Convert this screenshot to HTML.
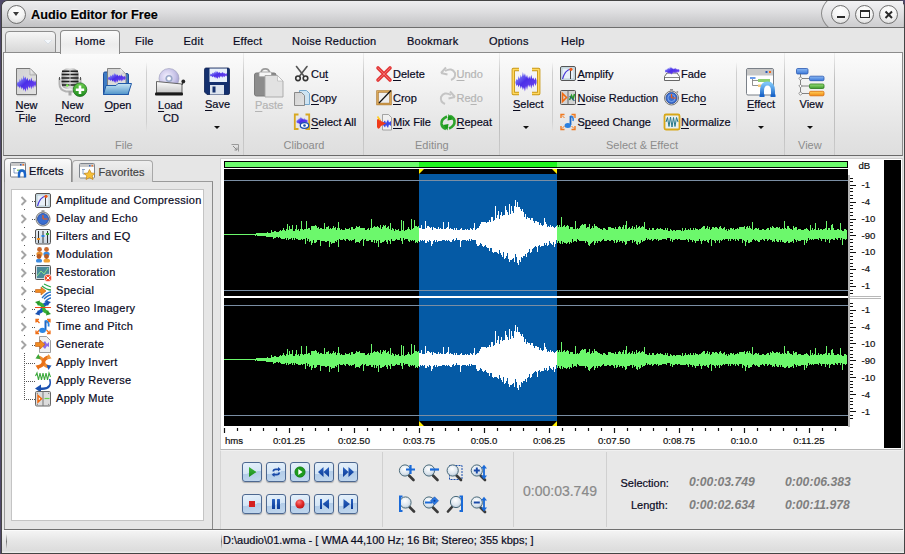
<!DOCTYPE html>
<html><head><meta charset="utf-8">
<style>
*{margin:0;padding:0;box-sizing:border-box}
html,body{width:905px;height:554px;overflow:hidden}
body{position:relative;background:#50496a;font-family:"Liberation Sans",sans-serif;font-size:11px;color:#0a0a1e}
.tx,.tab,.tree,.sl{-webkit-text-stroke:0.2px currentColor}
.a{position:absolute}
.tx{position:absolute;line-height:0;white-space:nowrap}
.cb{position:absolute;width:19px;height:19px;border-radius:50%;border:1px solid #707070;background:radial-gradient(circle at 50% 30%,#ffffff 0,#f4f4f4 50%,#d2d2d2 100%)}
.tab{position:absolute;top:41px;line-height:0;white-space:nowrap;letter-spacing:0.25px}
.lbl{position:absolute;top:145.4px;line-height:0;color:#8c8c8c;white-space:nowrap}
.gsep{position:absolute;top:53px;width:1px;height:102px;background:linear-gradient(#eeeeee,#c0c0c0 25%,#c0c0c0 75%,#cccccc)}
.isep{position:absolute;top:62px;width:1px;height:70px;background:linear-gradient(rgba(205,205,205,0),#cfcfcf 15%,#cfcfcf 85%,rgba(205,205,205,0))}
.arr{position:absolute;width:0;height:0;border-left:3px solid transparent;border-right:3px solid transparent;border-top:3px solid #111}
.tree{position:absolute;left:56px;line-height:0;white-space:nowrap;letter-spacing:0.3px}
.exp{position:absolute;left:20px;width:5px;height:5px;border-right:1.2px solid #909090;border-top:1.2px solid #909090;transform:rotate(45deg)}
.tb{position:absolute;width:20px;height:20px;border:1px solid #4d6890;border-radius:3px;background:linear-gradient(168deg,#e6f1fb 0,#d4e5f5 52%,#b2cce8 53%,#c2d8ee 100%);box-shadow:0 1px 1px rgba(0,0,0,0.25)}
.sl{position:absolute;left:861.5px;line-height:0;font-size:9.6px;color:#111;white-space:nowrap}
.val{position:absolute;line-height:0;font-weight:bold;font-style:italic;font-size:12.2px;color:#7f7f7f;white-space:nowrap}
.ico{position:absolute}
u{text-decoration:underline;text-underline-offset:1.5px;text-decoration-thickness:1px}
</style></head><body>
<!-- window frame -->
<div class="a" style="left:1px;top:0;width:904px;height:554px;background:#444;border-radius:7px 7px 0 0"></div>
<div class="a" style="left:2px;top:1px;width:902px;height:552px;background:#e6e6e6;border-radius:6px 6px 0 0;overflow:hidden">
  <div class="a" style="left:0;top:0;width:902px;height:26px;background:linear-gradient(#eeeef0,#dcdcde 45%,#c2c2c4)"></div>
</div>
<!-- title bar -->
<div class="cb" style="left:7px;top:5px"></div>
<div class="a" style="left:13px;top:12px;width:0;height:0;border-left:3.5px solid transparent;border-right:3.5px solid transparent;border-top:4px solid #3a3a3a"></div>
<div class="tx" style="left:31px;top:15px;font-size:12.7px;font-weight:bold;color:#000;text-shadow:0 0 3px #fff,0 0 2px #fff">Audio Editor for Free</div>
<div class="a" style="left:800px;top:1px;width:103px;height:27px;overflow:hidden"><div class="a" style="left:21px;top:-26px;width:200px;height:77px;border-radius:50%;border:1px solid #8a8a8a;background:linear-gradient(#f6f6f8 30%,#e2e2e4 50%,#d0d0d2 65%)"></div></div>
<div class="cb" style="left:831px;top:5px"></div>
<div class="cb" style="left:855px;top:5px"></div>
<div class="cb" style="left:879px;top:5px"></div>
<div class="a" style="left:837px;top:15.5px;width:7.5px;height:2.5px;background:#2a2a2a"></div>
<div class="a" style="left:860px;top:10px;width:10px;height:8px;border:1.5px solid #2a2a2a;border-top-width:2.5px"></div>
<svg class="a" style="left:879px;top:5px" width="19" height="19"><path d="M6.5 6.5L13 13M13 6.5L6.5 13" stroke="#2a2a2a" stroke-width="2"/></svg>
<div class="a" style="left:2px;top:27px;width:902px;height:1px;background:#6e6e6e"></div>

<!-- tab strip -->
<div class="a" style="left:2px;top:28px;width:902px;height:25px;background:#e6e6e6"></div>
<div class="a" style="left:5px;top:31px;width:51px;height:23px;border:1px solid #8e8e8e;border-radius:4px 4px 0 0;background:linear-gradient(#f6f6f6,#e6e6e6 50%,#d6d6d6)"></div>
<div class="a" style="left:44px;top:40px;width:0;height:0;border-left:4px solid transparent;border-right:4px solid transparent;border-top:4px solid #f4f8fc;filter:drop-shadow(0 0 0.5px #9ab)"></div>
<div class="a" style="left:60px;top:30px;width:60px;height:24px;border:1px solid #8a8a8a;border-bottom:none;border-radius:4px 4px 0 0;background:linear-gradient(#fafafa,#ececec 60%,#f4f4f4);z-index:2"></div>
<div class="tab" style="left:75px;z-index:3">Home</div>
<div class="tab" style="left:135px">File</div>
<div class="tab" style="left:183.5px">Edit</div>
<div class="tab" style="left:233px">Effect</div>
<div class="tab" style="left:292px">Noise Reduction</div>
<div class="tab" style="left:407px">Bookmark</div>
<div class="tab" style="left:489px">Options</div>
<div class="tab" style="left:561px">Help</div>

<!-- ribbon -->
<div class="a" style="left:3px;top:52px;width:900px;height:104px;border:1px solid #8c8c8c;border-bottom:1px solid #6a6a6a;background:linear-gradient(#fbfbfb,#eeeeee 45%,#e3e3e3 80%,#dedede)"></div>
<div class="gsep" style="left:243px"></div>
<div class="gsep" style="left:363px"></div>
<div class="gsep" style="left:499px"></div>
<div class="gsep" style="left:784px"></div>
<div class="gsep" style="left:834px"></div>
<div class="isep" style="left:146px"></div>
<div class="isep" style="left:552px"></div>
<div class="isep" style="left:736px"></div>
<div class="lbl" style="left:115px">File</div>
<div class="lbl" style="left:283.5px">Cliboard</div>
<div class="lbl" style="left:415px">Editing</div>
<div class="lbl" style="left:606px">Select &amp; Effect</div>
<div class="lbl" style="left:798px">View</div>
<svg class="a" style="left:231px;top:144px" width="8" height="8"><path d="M0.5 0.5H7.5V7.5" fill="none" stroke="#9a9a9a"/><path d="M2 2L6 6M3.5 6H6V3.5" fill="none" stroke="#8a8a8a"/></svg>

<!--RIBBONICONS-->
<svg class="a" style="left:0;top:0" width="905" height="554">
<defs>
<linearGradient id="gWave" x1="0" y1="0" x2="1" y2="1"><stop offset="0" stop-color="#9fb4ff"/><stop offset="0.45" stop-color="#4a2ee8"/><stop offset="1" stop-color="#7a4cf0"/></linearGradient>
<linearGradient id="gDoc" x1="0" y1="0" x2="1" y2="1"><stop offset="0" stop-color="#d2d2d2"/><stop offset="1" stop-color="#e2e2e2"/></linearGradient>
<linearGradient id="gFold" x1="0" y1="0" x2="1" y2="1"><stop offset="0" stop-color="#ffffff"/><stop offset="1" stop-color="#bdbdbd"/></linearGradient>
<linearGradient id="gFolder" x1="0" y1="0" x2="0" y2="1"><stop offset="0" stop-color="#c8e6f4"/><stop offset="1" stop-color="#4f93c9"/></linearGradient>
<linearGradient id="gMic" x1="0" y1="0" x2="1" y2="0"><stop offset="0" stop-color="#9a9a9a"/><stop offset="0.5" stop-color="#e8e8e8"/><stop offset="1" stop-color="#8a8a8a"/></linearGradient>
<linearGradient id="gBox" x1="0" y1="0" x2="0" y2="1"><stop offset="0" stop-color="#ffffff"/><stop offset="1" stop-color="#c4c4c4"/></linearGradient>
<radialGradient id="gCD" cx="0.4" cy="0.4" r="0.7"><stop offset="0" stop-color="#f4f0ff"/><stop offset="0.6" stop-color="#c8c4e8"/><stop offset="1" stop-color="#9a96c8"/></radialGradient>
<linearGradient id="gYel" x1="0" y1="0" x2="0" y2="1"><stop offset="0" stop-color="#ffe27a"/><stop offset="1" stop-color="#f0c030"/></linearGradient>
<linearGradient id="gGreenBall" x1="0" y1="0" x2="0" y2="1"><stop offset="0" stop-color="#6ccf4c"/><stop offset="1" stop-color="#1c8a1c"/></linearGradient>
<linearGradient id="gBlueBar" x1="0" y1="0" x2="0" y2="1"><stop offset="0" stop-color="#8ab8f4"/><stop offset="1" stop-color="#3c78d8"/></linearGradient>
<linearGradient id="gGreenBar" x1="0" y1="0" x2="0" y2="1"><stop offset="0" stop-color="#9ce07a"/><stop offset="1" stop-color="#3c9a2c"/></linearGradient>
<linearGradient id="gOrBar" x1="0" y1="0" x2="0" y2="1"><stop offset="0" stop-color="#ffd060"/><stop offset="1" stop-color="#f08a10"/></linearGradient>
<linearGradient id="gOmega" x1="0" y1="0" x2="0" y2="1"><stop offset="0" stop-color="#7cc4f8"/><stop offset="1" stop-color="#1a64c8"/></linearGradient>
<path id="wave" d="M0 8 L1 6 2 7 3 4 4 6 5 3 6 5 7 1 8 4 9 2 10 5 11 3 12 6 13 4 14 6 15 3 16 6 17 5 18 7 19 5 20 7 L20 9 19 11 18 9 17 12 16 10 15 13 14 10 13 12 12 10 11 14 10 11 9 15 8 12 7 14 6 11 5 13 4 10 3 12 2 10 1 11 0 9Z"/>
</defs>
<!-- New File -->
<g>
<path d="M16.5 68.5H30L36.5 75V94.5H16.5Z" fill="url(#gDoc)" stroke="#777" stroke-width="1"/>
<path d="M30 68.5V75H36.5Z" fill="url(#gFold)" stroke="#999" stroke-width="0.6"/>
<use href="#wave" transform="translate(17,74) scale(0.95,1.2)" fill="url(#gWave)"/>
<path d="M17 95.5H36.5" stroke="#000" stroke-opacity="0.12" stroke-width="1.5"/>
</g>
<!-- New Record -->
<g>
<path d="M59.5 78V84Q59.5 90 66 91.5H74Q80.5 90 80.5 84V78" fill="none" stroke="#b4b4b4" stroke-width="2"/>
<path d="M59.5 77v3M80.5 77v3" stroke="#555" stroke-width="1"/>
<rect x="68.5" y="91" width="3" height="4.5" fill="#a8a8a8"/>
<rect x="61.5" y="68.2" width="17" height="21" rx="7" ry="5" fill="url(#gMic)"/>
<path d="M62 71.2H78M61.7 74.5H78.3M61.5 78H78.5M61.5 81.5H78.5M62 85H78" stroke="#1e1e1e" stroke-width="1.6"/>
<path d="M70 69V88" stroke="#c8c8c8" stroke-width="1"/>
<circle cx="67.3" cy="85.5" r="1.3" fill="#7cf050"/>
<circle cx="80" cy="89.7" r="6.8" fill="url(#gGreenBall)" stroke="#1c6e1c" stroke-width="0.8"/>
<path d="M80 85.5V94M75.8 89.7H84.2" stroke="#fff" stroke-width="2.6"/>
</g>
<!-- Open -->
<g>
<path d="M103.5 94.5V73.5Q103.5 72 105 72H109L110 73.5H127Q128.5 73.5 128.5 75V94.5Z" fill="#3e7cc4" stroke="#1f4f9a" stroke-width="1"/>
<path d="M107.5 68.5H120.5L126 74V88H107.5Z" fill="url(#gDoc)" stroke="#777" stroke-width="0.9"/>
<path d="M120.5 68.5V74H126Z" fill="url(#gFold)"/>
<use href="#wave" transform="translate(108,72) scale(0.88,0.75)" fill="url(#gWave)"/>
<path d="M103.5 94.5L106 85.5H116L118 83.5H131.5L128 94.5Z" fill="url(#gFolder)" stroke="#2059a8" stroke-width="1"/>
</g>
<!-- Load CD -->
<g>
<circle cx="169" cy="78.5" r="10" fill="url(#gCD)" stroke="#9a9ab8" stroke-width="0.6"/>
<circle cx="169" cy="78.5" r="3.6" fill="#9aa8c8"/>
<circle cx="169" cy="78.5" r="1.9" fill="#fff"/>
<path d="M156.5 81.5L182 84V93H156.5Z" fill="url(#gBox)" stroke="#555" stroke-width="0.9"/>
<rect x="155" y="92.5" width="28" height="3" rx="1" fill="#1a1a1a"/>
<path d="M182 85L183 81.5" stroke="#333" stroke-width="1"/>
<circle cx="183.3" cy="81.5" r="1.9" fill="#222"/>
</g>
<!-- Save -->
<g>
<path d="M204.5 69.5Q204.5 68 206 68H228Q229.5 68 229.5 69.5V93Q229.5 94.5 228 94.5H207L204.5 92Z" fill="#14306e" stroke="#0c2050" stroke-width="0.8"/>
<rect x="209.5" y="68.5" width="17.5" height="13.5" fill="#e8f0fa"/>
<use href="#wave" transform="translate(210,70) scale(0.85,0.6)" fill="url(#gWave)"/>
<rect x="210" y="85" width="14" height="9.5" fill="#dde4ee"/>
<rect x="212.5" y="86.5" width="3" height="6" fill="#14306e"/>
</g>
<!-- Paste (disabled) -->
<g>
<rect x="254.5" y="73" width="21.5" height="23" rx="2" fill="#8c8c8c" stroke="#7a7a7a"/>
<path d="M261 72.5A4.3 4.3 0 0 1 269.5 72.5" fill="none" stroke="#9a9a9a" stroke-width="1.6"/>
<rect x="259" y="72" width="12.5" height="4.8" rx="1" fill="#f6f6f6" stroke="#9a9a9a" stroke-width="0.8"/>
<path d="M265 75.5H277.5L283 81V97H265Z" fill="#e2e2e2" stroke="#a6a6a6" stroke-width="0.9"/>
<path d="M277.5 75.5V81H283Z" fill="#fafafa" stroke="#b0b0b0" stroke-width="0.6"/>
</g>
<!-- Cut -->
<g fill="none" stroke="#333" stroke-linecap="round">
<path d="M296.5 66.5L303.5 75.5M307 66.5L300 75.5" stroke-width="1.6" stroke="#555"/>
<circle cx="298" cy="78.3" r="2.3" stroke-width="1.6"/>
<circle cx="305.5" cy="78.3" r="2.3" stroke-width="1.6"/>
</g>
<!-- Copy -->
<g>
<path d="M299.5 90.5H306.5L309.5 93.5V104.5H299.5Z" fill="#cfe4f2" stroke="#6aa0c8" stroke-width="0.9"/>
<path d="M294.5 92.5H301.5L304.5 95.5V105.5H294.5Z" fill="url(#gDoc)" stroke="#808080" stroke-width="0.9"/>
</g>
<!-- Select All -->
<g>
<path d="M298.5 114.5H294.8V129H298.5M305.5 114.5H309.2V129H305.5" fill="none" stroke="#d8a820" stroke-width="1.8"/>
<use href="#wave" transform="translate(296.5,116) scale(0.55,0.65)" fill="url(#gWave)"/>
<ellipse cx="304.5" cy="125.5" rx="4.2" ry="2.8" fill="#fff" stroke="#1c4fb0" stroke-width="1.3"/>
<circle cx="304.5" cy="125.5" r="1.3" fill="#1c4fb0"/>
</g>
<!-- Delete -->
<path d="M378 68L390 80M390 68L378 80" stroke="#e23a3a" stroke-width="3.6" stroke-linecap="round"/>
<path d="M378 68L390 80M390 68L378 80" stroke="#ff8a8a" stroke-width="1" stroke-linecap="round" stroke-opacity="0.6"/>
<!-- Crop -->
<g>
<rect x="377.5" y="91.5" width="13" height="12.5" fill="none" stroke="#b07a30" stroke-width="2.4"/>
<rect x="377.5" y="91.5" width="13" height="12.5" fill="none" stroke="#e0b060" stroke-width="0.8"/>
<path d="M379 103L391 90.5" stroke="#111" stroke-width="1.2"/>
</g>
<!-- Mix File -->
<g>
<path d="M382.5 114.5H388.5L391.5 117.5V130H382.5Z" fill="#f0f0f0" stroke="#909090" stroke-width="0.8"/>
<path d="M383 122.5L385 120.5 386 123 388 119.5 389 122.5 391 121V126L389 124.5 388 128 386 125 385 127.5 383 125Z" fill="#3a4ae8"/>
<path d="M377 120Q379 116 381 121L386 123.5 381 126Q378.5 131 377 127Z" fill="#f03a1a"/>
<path d="M377.5 116.5L380 120" stroke="#ffd020" stroke-width="1.6"/>
</g>
<!-- Undo/Redo (disabled) -->
<g fill="none" stroke="#c4c4c4" stroke-width="2">
<path d="M445 71Q452 67 455 73Q456 78 451 80"/>
<path d="M441 73L446 67.5M441 73L447.5 74.5"/>
<path d="M451 95Q444 91 441 97Q440 102 445 104"/>
<path d="M455 97L450 91.5M455 97L448.5 98.5"/>
</g>
<!-- Repeat -->
<g fill="none" stroke="#2ca42c" stroke-width="2.6">
<path d="M447 116.5Q441 119 441.5 124Q442 127.5 446 129"/>
<path d="M449 128.5Q455 126 454.5 121Q454 117.5 450 116"/>
</g>
<path d="M443 125L447.5 130.5 448.5 124Z M453 119.5L448.5 114 447.5 120.5Z" fill="#1a9a1a"/>
<!-- Select large -->
<g>
<path d="M519 69.5H513.3V93.5H519M532 69.5H538.7V93.5H532" fill="none" stroke="#c89818" stroke-width="3.4" stroke-linejoin="round"/>
<path d="M519 69.5H513.3V93.5H519M532 69.5H538.7V93.5H532" fill="none" stroke="#ffd860" stroke-width="1.6" stroke-linejoin="round"/>
<use href="#wave" transform="translate(515.5,70.5) scale(1.05,1.4)" fill="url(#gWave)"/>
</g>
<!-- Amplify -->
<g>
<rect x="560.5" y="66.5" width="15" height="14" rx="1.5" fill="#d8e4f0" stroke="#555" stroke-width="1"/>
<rect x="562" y="68" width="12" height="11" fill="#e8f0f8" stroke="#8aa" stroke-width="0.5"/>
<path d="M562.5 79Q565 70 571 69" fill="none" stroke="#4a3ad8" stroke-width="1.2"/>
<path d="M570.5 69V79" stroke="#444" stroke-width="1"/>
<circle cx="571" cy="69.3" r="1.6" fill="#f05a1a"/>
</g>
<!-- Noise Reduction -->
<g>
<rect x="560.5" y="90.5" width="15" height="14" rx="1" fill="#d4d4d4" stroke="#555" stroke-width="1"/>
<path d="M568 90.5V104.5" stroke="#666"/>
<path d="M562.5 93.5L566.5 97.5 562.5 101.5Z" fill="none" stroke="#f06a10" stroke-width="1.6"/>
<path d="M569.5 100L571.5 95.5 573 99 574.5 94" stroke="#2a9a2a" stroke-width="1.6" fill="none"/>
<path d="M569.5 96L574.5 101" stroke="#1a3a8a" stroke-width="1"/>
</g>
<!-- Speed Change -->
<g>
<path d="M561 118V114.5H564.5M575 118V114.5H571.5M561 126V129.5H564.5M575 126V129.5H571.5" fill="none" stroke="#f07a20" stroke-width="1.4"/>
<path d="M562 115.5L564.5 118M574 115.5L571.5 118M562 128.5L564.5 126M574 128.5L571.5 126" stroke="#f07a20" stroke-width="1"/>
<path d="M570.5 116V125" stroke="#1c68c8" stroke-width="1.8"/>
<ellipse cx="567.8" cy="125.5" rx="3.2" ry="2.5" fill="#2a80e0"/>
<path d="M570.5 116Q574 117 573 121" fill="none" stroke="#2a80e0" stroke-width="1.5"/>
</g>
<!-- Fade -->
<g>
<path d="M664.5 76.5L667 73H677L679.5 76.5V80.5H664.5Z" fill="#fafafa" stroke="#666" stroke-width="1"/>
<path d="M664.5 77.5H679.5" stroke="#666" stroke-width="0.8"/>
<use href="#wave" transform="translate(665,66) scale(0.72,0.58)" fill="url(#gWave)"/>
</g>
<!-- Echo -->
<g>
<circle cx="671.5" cy="98" r="7" fill="#dcdcdc" stroke="#777" stroke-width="1"/>
<circle cx="671.5" cy="98" r="5.5" fill="#3a6ed0" stroke="#24489a" stroke-width="0.8"/>
<circle cx="671.5" cy="98" r="3.6" fill="none" stroke="#a8c8f8" stroke-width="0.6"/>
<path d="M671.5 98H676M671.5 98V94" stroke="#f05a10" stroke-width="1.2"/>
<path d="M670 89.8H673" stroke="#777" stroke-width="1.2"/>
<circle cx="677.3" cy="92" r="1" fill="#999"/>
</g>
<!-- Normalize -->
<g>
<rect x="664.5" y="114.5" width="15" height="15" rx="1.5" fill="#e8f0f0" stroke="#d8a818" stroke-width="1.8"/>
<path d="M666 122L667.5 117.5 669 126.5 670.5 117 672 127 673.5 117.5 675 126.5 676.5 117.5 678 122" fill="none" stroke="#2a7a8a" stroke-width="1"/>
</g>
<!-- Effect large -->
<g>
<rect x="746.5" y="68.5" width="27" height="26.5" rx="1.5" fill="#fff" stroke="#7a8088" stroke-width="1"/>
<rect x="747" y="69" width="26" height="6.5" fill="#c8c8c8"/>
<rect x="765.5" y="71" width="2" height="2" fill="#2a5ab8"/>
<rect x="769" y="71" width="2" height="2" fill="#f06a20"/>
<rect x="750" y="77" width="5.5" height="2" fill="#6a9ae8"/>
<path d="M752.5 79V85.5H758M752.5 80.5H758" fill="none" stroke="#777" stroke-width="0.8"/>
<rect x="758" y="79" width="12" height="3" fill="#8ed070"/>
<rect x="758" y="84.5" width="5" height="2.5" fill="#f8c878"/>
<path d="M762 96V91Q762 83.5 767.5 83.5Q773 83.5 773 91V96" fill="none" stroke="url(#gOmega)" stroke-width="4"/>
<path d="M759.5 94.5H764.5V97H759.5ZM770.5 94.5H775.5V97H770.5Z" fill="#1a64c8"/>
</g>
<!-- View large -->
<g>
<rect x="796.5" y="68.5" width="11.5" height="5.5" rx="1.2" fill="url(#gBlueBar)" stroke="#2a58b0" stroke-width="0.8"/>
<path d="M800.5 74V93.5M800.5 78.5H809M800.5 86H809M800.5 93.5H809" stroke="#666" stroke-width="0.8"/>
<path d="M800.5 76.8L802.2 78.5 800.5 80.2 798.8 78.5Z M800.5 84.3L802.2 86 800.5 87.7 798.8 86Z M800.5 91.8L802.2 93.5 800.5 95.2 798.8 93.5Z" fill="#fff" stroke="#666" stroke-width="0.7"/>
<rect x="809.5" y="76.2" width="14.5" height="4.5" rx="1.2" fill="url(#gBlueBar)" stroke="#2a58b0" stroke-width="0.8"/>
<rect x="809.5" y="84" width="14.5" height="4.5" rx="1.2" fill="url(#gGreenBar)" stroke="#2a7a1a" stroke-width="0.8"/>
<rect x="809.5" y="91.3" width="14.5" height="4.5" rx="1.2" fill="url(#gOrBar)" stroke="#d86a08" stroke-width="0.8"/>
</g>
</svg>
<!--/RIBBONICONS-->
<!--RIBBONTEXT-->
<div class="tx" style="left:15.5px;top:105.2px"><u>N</u>ew</div>
<div class="tx" style="left:18.5px;top:118.2px">File</div>
<div class="tx" style="left:61.5px;top:105.2px">New</div>
<div class="tx" style="left:55px;top:118.2px"><u>R</u>ecord</div>
<div class="tx" style="left:104.5px;top:105.2px"><u>O</u>pen</div>
<div class="tx" style="left:158px;top:105.2px"><u>L</u>oad</div>
<div class="tx" style="left:163px;top:118.2px">CD</div>
<div class="tx" style="left:205px;top:104.2px"><u>S</u>ave</div>
<div class="arr" style="left:214px;top:126px"></div>
<div class="tx" style="left:255px;top:105.2px;color:#b4b4b4"><u>P</u>aste</div>
<div class="tx" style="left:311px;top:74.2px">Cu<u>t</u></div>
<div class="tx" style="left:311px;top:98.2px"><u>C</u>opy</div>
<div class="tx" style="left:311px;top:122.2px"><u>S</u>elect All</div>
<div class="tx" style="left:393px;top:74.2px"><u>D</u>elete</div>
<div class="tx" style="left:393px;top:98.2px"><u>C</u>rop</div>
<div class="tx" style="left:393px;top:122.2px"><u>M</u>ix File</div>
<div class="tx" style="left:456.5px;top:74.2px;color:#b4b4b4"><u>U</u>ndo</div>
<div class="tx" style="left:456.5px;top:98.2px;color:#b4b4b4">Re<u>d</u>o</div>
<div class="tx" style="left:456.5px;top:122.2px"><u>R</u>epeat</div>
<div class="tx" style="left:513px;top:104.2px"><u>S</u>elect</div>
<div class="arr" style="left:523px;top:126px"></div>
<div class="tx" style="left:577.5px;top:74.2px"><u>A</u>mplify</div>
<div class="tx" style="left:577.5px;top:98.2px"><u>N</u>oise Reduction</div>
<div class="tx" style="left:577.5px;top:122.2px">S<u>p</u>eed Change</div>
<div class="tx" style="left:681px;top:74.2px">Fade</div>
<div class="tx" style="left:681px;top:98.2px">Ech<u>o</u></div>
<div class="tx" style="left:681px;top:122.2px"><u>N</u>ormalize</div>
<div class="tx" style="left:747px;top:104.2px"><u>E</u>ffect</div>
<div class="arr" style="left:757.5px;top:126px"></div>
<div class="tx" style="left:799.5px;top:104.2px">View</div>
<div class="arr" style="left:807px;top:126px"></div>
<!--/RIBBONTEXT-->

<!-- left panel -->
<div class="a" style="left:4px;top:181px;width:209px;height:349px;border:1px solid #9a9a9a;border-right-color:#8a8a8a;border-bottom:1px solid #6e6e6e;background:#e6e6e6"></div>
<div class="a" style="left:72px;top:160px;width:81px;height:22px;border:1px solid #a8a8a8;border-bottom:none;border-radius:4px 4px 0 0;background:linear-gradient(#eeeeee,#dcdcdc)"></div>
<div class="a" style="left:4px;top:158px;width:68px;height:24px;border:1px solid #8e8e8e;border-bottom:none;border-radius:4px 4px 0 0;background:linear-gradient(#fafafa,#ececec 60%,#e6e6e6)"></div>
<div class="tx" style="left:29px;top:171px;letter-spacing:0.2px">Effcets</div>
<div class="tx" style="left:98.5px;top:172px;color:#444;letter-spacing:0.1px">Favorites</div>
<div class="a" style="left:11px;top:189px;width:193px;height:332px;border:1px solid #c4c4c4;background:#fff"></div>
<!--TREE-->
<div class="tree" style="top:200px">Amplitude and Compression</div>
<div class="tree" style="top:218px">Delay and Echo</div>
<div class="tree" style="top:236px">Filters and EQ</div>
<div class="tree" style="top:254px">Modulation</div>
<div class="tree" style="top:272px">Restoration</div>
<div class="tree" style="top:290px">Special</div>
<div class="tree" style="top:308px">Stereo Imagery</div>
<div class="tree" style="top:326px">Time and Pitch</div>
<div class="tree" style="top:344px">Generate</div>
<div class="tree" style="top:362px">Apply Invert</div>
<div class="tree" style="top:380px">Apply Reverse</div>
<div class="tree" style="top:398px">Apply Mute</div>
<!--TREEICONS-->
<svg class="a" style="left:0;top:0" width="905" height="554">
<defs>
<linearGradient id="gBtnBlue" x1="0" y1="0" x2="0" y2="1"><stop offset="0" stop-color="#6aa8f0"/><stop offset="1" stop-color="#1a58c0"/></linearGradient>
<linearGradient id="gTreeBox" x1="0" y1="0" x2="0" y2="1"><stop offset="0" stop-color="#e8eef4"/><stop offset="1" stop-color="#c8d4e0"/></linearGradient>
</defs>
<!-- tab icons -->
<g>
<rect x="10.5" y="162.5" width="15" height="14.5" rx="1" fill="#fff" stroke="#7a8088"/>
<rect x="11" y="163" width="14" height="3" fill="#c8c8c8"/>
<rect x="20" y="164" width="1.5" height="1.5" fill="#2a5ab8"/><rect x="22.5" y="164" width="1.5" height="1.5" fill="#f06a20"/>
<path d="M13 168.5H16M14 168.5V173H18" fill="none" stroke="#6a8ab8" stroke-width="0.8"/>
<rect x="17" y="169.5" width="6" height="1.5" fill="#8ed070"/>
<path d="M19 177.5V174.5Q19 170.5 22 170.5Q25 170.5 25 174.5V177.5" fill="none" stroke="#1a64c8" stroke-width="2.4"/>
</g>
<g opacity="0.95">
<rect x="79.5" y="163.5" width="15" height="14.5" rx="1" fill="#fff" stroke="#7a8088"/>
<rect x="80" y="164" width="14" height="3" fill="#c8c8c8"/>
<rect x="89" y="165" width="1.5" height="1.5" fill="#2a5ab8"/><rect x="91.5" y="165" width="1.5" height="1.5" fill="#f06a20"/>
<path d="M82 169.5H85M83 169.5V174H86" fill="none" stroke="#6a8ab8" stroke-width="0.8"/>
<path d="M89.5 169.5L91.2 173 95 173.4 92.2 175.9 93 179.5 89.5 177.6 86 179.5 86.8 175.9 84 173.4 87.8 173Z" fill="#f8c030" stroke="#c08010" stroke-width="0.7"/>
</g>
<!-- tree expanders -->
<path d="M21.5 197L25.5 201L21.5 205M21.5 215L25.5 219L21.5 223M21.5 233L25.5 237L21.5 241M21.5 251L25.5 255L21.5 259M21.5 269L25.5 273L21.5 277M21.5 287L25.5 291L21.5 295M21.5 305L25.5 309L21.5 313M21.5 323L25.5 327L21.5 331M21.5 341L25.5 345L21.5 349" fill="none" stroke="#a4a4a4" stroke-width="1.9"/>
<!-- dotted lines -->
<g fill="#555">
<rect x="32" y="201" width="1" height="1"/>
<rect x="34" y="201" width="1" height="1"/>
<rect x="32" y="219" width="1" height="1"/>
<rect x="34" y="219" width="1" height="1"/>
<rect x="32" y="237" width="1" height="1"/>
<rect x="34" y="237" width="1" height="1"/>
<rect x="32" y="255" width="1" height="1"/>
<rect x="34" y="255" width="1" height="1"/>
<rect x="32" y="273" width="1" height="1"/>
<rect x="34" y="273" width="1" height="1"/>
<rect x="32" y="291" width="1" height="1"/>
<rect x="34" y="291" width="1" height="1"/>
<rect x="32" y="309" width="1" height="1"/>
<rect x="34" y="309" width="1" height="1"/>
<rect x="32" y="327" width="1" height="1"/>
<rect x="34" y="327" width="1" height="1"/>
<rect x="32" y="345" width="1" height="1"/>
<rect x="34" y="345" width="1" height="1"/>
<rect x="24" y="363" width="1" height="1"/>
<rect x="26" y="363" width="1" height="1"/>
<rect x="28" y="363" width="1" height="1"/>
<rect x="30" y="363" width="1" height="1"/>
<rect x="32" y="363" width="1" height="1"/>
<rect x="34" y="363" width="1" height="1"/>
<rect x="24" y="381" width="1" height="1"/>
<rect x="26" y="381" width="1" height="1"/>
<rect x="28" y="381" width="1" height="1"/>
<rect x="30" y="381" width="1" height="1"/>
<rect x="32" y="381" width="1" height="1"/>
<rect x="34" y="381" width="1" height="1"/>
<rect x="24" y="399" width="1" height="1"/>
<rect x="26" y="399" width="1" height="1"/>
<rect x="28" y="399" width="1" height="1"/>
<rect x="30" y="399" width="1" height="1"/>
<rect x="32" y="399" width="1" height="1"/>
<rect x="34" y="399" width="1" height="1"/>
<rect x="24" y="209" width="1" height="1"/>
<rect x="24" y="227" width="1" height="1"/>
<rect x="24" y="245" width="1" height="1"/>
<rect x="24" y="263" width="1" height="1"/>
<rect x="24" y="281" width="1" height="1"/>
<rect x="24" y="299" width="1" height="1"/>
<rect x="24" y="317" width="1" height="1"/>
<rect x="24" y="335" width="1" height="1"/>
<rect x="24" y="353" width="1" height="1"/>
<rect x="24" y="355" width="1" height="1"/>
<rect x="24" y="357" width="1" height="1"/>
<rect x="24" y="359" width="1" height="1"/>
<rect x="24" y="361" width="1" height="1"/>
<rect x="24" y="363" width="1" height="1"/>
<rect x="24" y="365" width="1" height="1"/>
<rect x="24" y="367" width="1" height="1"/>
<rect x="24" y="369" width="1" height="1"/>
<rect x="24" y="371" width="1" height="1"/>
<rect x="24" y="373" width="1" height="1"/>
<rect x="24" y="375" width="1" height="1"/>
<rect x="24" y="377" width="1" height="1"/>
<rect x="24" y="379" width="1" height="1"/>
<rect x="24" y="381" width="1" height="1"/>
<rect x="24" y="383" width="1" height="1"/>
<rect x="24" y="385" width="1" height="1"/>
<rect x="24" y="387" width="1" height="1"/>
<rect x="24" y="389" width="1" height="1"/>
<rect x="24" y="391" width="1" height="1"/>
<rect x="24" y="393" width="1" height="1"/>
<rect x="24" y="395" width="1" height="1"/>
<rect x="24" y="397" width="1" height="1"/>
<rect x="24" y="399" width="1" height="1"/>
</g>
<!-- tree icons -->
<!-- Amplitude -->
<g>
<rect x="35.5" y="193.5" width="15" height="14" rx="1.5" fill="#d8e4f0" stroke="#555"/>
<rect x="37" y="195" width="12" height="11" fill="#e8f0f8" stroke="#8aa" stroke-width="0.5"/>
<path d="M37.5 206Q40 197 46 196" fill="none" stroke="#4a3ad8" stroke-width="1.2"/>
<path d="M45.5 196V206" stroke="#444"/>
<circle cx="46" cy="196.3" r="1.6" fill="#f05a1a"/>
</g>
<!-- Delay -->
<g>
<circle cx="43" cy="219" r="7" fill="#dcdcdc" stroke="#777"/>
<circle cx="43" cy="219" r="5.5" fill="#3a6ed0" stroke="#24489a" stroke-width="0.8"/>
<path d="M43 219H47.5M43 219V215" stroke="#f05a10" stroke-width="1.2"/>
<path d="M41.5 211H44.5" stroke="#777" stroke-width="1.2"/>
</g>
<!-- Filters -->
<g>
<rect x="35.5" y="229.5" width="15" height="14.5" rx="1.5" fill="url(#gTreeBox)" stroke="#555"/>
<path d="M38.5 231V243M43 231V243M47.5 231V243" stroke="#333" stroke-width="1"/>
<rect x="37" y="238" width="3" height="2" fill="#f09020"/>
<rect x="41.5" y="235" width="3" height="2" fill="#2a80e0"/>
<rect x="46" y="233" width="3" height="2" fill="#3aa83a"/>
</g>
<!-- Modulation -->
<g>
<circle cx="39.5" cy="249.5" r="2.4" fill="#c86a30"/><rect x="36.5" y="252" width="6" height="4" rx="1.5" fill="#e89030"/>
<circle cx="46.5" cy="249.5" r="2.4" fill="#c86a30"/><rect x="43.5" y="252" width="6" height="4" rx="1.5" fill="#3a8ae0"/>
<circle cx="39" cy="256.5" r="2.4" fill="#b85a20"/><rect x="36" y="259" width="6" height="3.5" rx="1.5" fill="#3a8ae0"/>
<circle cx="46.5" cy="256.5" r="2.4" fill="#b85a20"/><rect x="43.5" y="259" width="6.5" height="3.5" rx="1.5" fill="#f0a030"/>
</g>
<!-- Restoration -->
<g>
<rect x="35.5" y="265.5" width="15" height="14" rx="1" fill="#d0d8e0" stroke="#555"/>
<rect x="37" y="267" width="12" height="11" fill="#4a8a9a"/>
<path d="M37 276L41 271 44 274 48 268" stroke="#8ae08a" stroke-width="1" fill="none"/>
<circle cx="48" cy="278" r="3.8" fill="#f04a2a" stroke="#fff" stroke-width="0.8"/>
<path d="M46.3 276.3L49.7 279.7M49.7 276.3L46.3 279.7" stroke="#fff" stroke-width="1"/>
</g>
<!-- Special -->
<g>
<path d="M42 298Q47 292 51 292M44 299Q48 295 51 295M45 302Q49 298 51 298" fill="none" stroke="#2a70c8" stroke-width="1.3"/>
<path d="M42 286Q47 290 51 290M44 284Q48 286 51 287" fill="none" stroke="#2aa84a" stroke-width="1.3"/>
<path d="M35.5 289.5H41V287L46 291 41 295V292.5H35.5Z" fill="#f08a20" stroke="#c05a10" stroke-width="0.6"/>
</g>
<!-- Stereo -->
<g>
<path d="M37.5 303.5Q43 304 43.5 308Q44 312 48.5 312.5" fill="none" stroke="#1a58c0" stroke-width="3.4" transform="matrix(-1 0 0 1 86 0)"/>
<path d="M37.5 303.5Q43 304 43.5 308Q44 312 48.5 312.5" fill="none" stroke="#38b038" stroke-width="3.4"/>
<path d="M35 302L40 300.5 39 305.5Z M51 314L46 315.5 47 310.5Z" fill="#2a9a2a"/>
<path d="M51 302L46 300.5 47 305.5Z M35 314L40 315.5 39 310.5Z" fill="#1a50b0"/>
<path d="M35 307.5H51" stroke="#f04818" stroke-width="1"/>
</g>
<!-- Time and Pitch -->
<g fill="none" stroke="#f07018" stroke-width="1.3">
<path d="M36 322.5V319.5H39M36.3 319.8L39.5 323"/>
<path d="M50 322.5V319.5H47M49.7 319.8L46.5 323"/>
<path d="M36 330.5V333.5H39M36.3 333.2L39.5 330"/>
<path d="M50 330.5V333.5H47M49.7 333.2L46.5 330"/>
</g>
<g>
<path d="M45.5 320.5V330" stroke="#1c68c8" stroke-width="2"/>
<ellipse cx="42.5" cy="330.3" rx="3.3" ry="2.6" fill="#2a86e4"/>
<path d="M45.5 320.5Q49.5 322 48.5 326.5" fill="none" stroke="#2a86e4" stroke-width="1.8"/>
</g>
<!-- Generate -->
<g>
<path d="M39.5 336.5H46.5L50.5 340.5V352.5H39.5Z" fill="#f0f0f0" stroke="#888" stroke-width="0.8"/>
<path d="M43 343L45 341 47 344 49 342V347L47 346 45 349 43 347Z" fill="#8a6ae8"/>
<path d="M35.5 342.5H40V340L45 344.5 40 349V346.5H35.5Z" fill="#f08a20" stroke="#c05a10" stroke-width="0.6"/>
</g>
<!-- Apply Invert -->
<g>
<path d="M37.5 357Q43 358 43.5 362Q44 366 49.5 367" fill="none" stroke="#f08a30" stroke-width="3.2"/>
<path d="M49.5 357Q44 358 43.5 362Q43 366 37.5 367" fill="none" stroke="#e87018" stroke-width="3.4"/>
<path d="M35.5 358.5L38.5 354 40.5 359Z" fill="#3aa83a"/>
<path d="M51.5 365.5L48.5 370 46.5 365Z" fill="#1a58b8"/>
<path d="M51.5 358.5L48.5 354 46.5 359Z" fill="#f09a40"/>
<path d="M35.5 365.5L38.5 370 40.5 365Z" fill="#e87018"/>
</g>
<!-- Apply Reverse -->
<g>
<path d="M35.5 376L37 373 38.5 380 40 373 41.5 380 43 373 44.5 380 46 373 47.5 380 49 373 50.5 377" fill="none" stroke="#3aa83a" stroke-width="1.1"/>
<path d="M49 379Q51.5 388 42 387.5H41V384.5L35 388.5 41 392.5V390H42Q53 390 50.5 379Z" fill="#1a50b0"/>
</g>
<!-- Apply Mute -->
<g>
<rect x="35.5" y="391.5" width="15" height="14.5" rx="1.2" fill="#dcdcdc" stroke="#666"/>
<path d="M43 391.5V406" stroke="#777"/>
<path d="M38 395.5L41.5 398.7 38 402Z" fill="#fff" stroke="#f06a10" stroke-width="1.5"/>
<path d="M44.5 398.5H49.5" stroke="#6ad050" stroke-width="1.2"/>
<circle cx="37.3" cy="393.3" r="0.5" fill="#555"/><circle cx="48.7" cy="393.3" r="0.5" fill="#555"/>
<circle cx="37.3" cy="404.3" r="0.5" fill="#555"/><circle cx="48.7" cy="404.3" r="0.5" fill="#555"/>
</g>
</svg>
<!--/TREEICONS-->
<!--/TREE-->

<!-- wave panel -->
<div class="a" style="left:220px;top:158px;width:683px;height:292px;border:1px solid #cfcfcf;border-bottom-color:#b6b6b6;background:#fff"></div>
<div class="a" style="left:224px;top:161px;width:624px;height:265px;background:#000"></div>
<div class="a" style="left:225px;top:162px;width:622px;height:5px;background:#6cfb6c"></div>
<div class="a" style="left:419px;top:162px;width:138px;height:5px;background:#1ff51f"></div>
<div class="a" style="left:224px;top:168px;width:624px;height:1px;background:#fff"></div>
<div class="a" style="left:419px;top:174px;width:138px;height:247px;background:#055aa5"></div>
<div class="a" style="left:224px;top:180px;width:624px;height:1px;background:#7a8ea4"></div>
<div class="a" style="left:224px;top:290px;width:624px;height:1px;background:#7a8ea4"></div>
<div class="a" style="left:224px;top:296px;width:624px;height:2px;background:#fff"></div>
<div class="a" style="left:224px;top:305px;width:624px;height:1px;background:#7a8ea4"></div>
<div class="a" style="left:224px;top:415px;width:624px;height:1px;background:#7a8ea4"></div>
<svg class="a" style="left:0;top:0" width="905" height="554">
<path d="M419 169h5l-5 5zM557 169h-5l5 5zM419 426v-5l5 5zM557 426v-5l-5 5z" fill="#ffee00"/>
</svg>
<!--WAVE-->
<svg class="a" style="left:0;top:0" width="905" height="554">
<path d="M224.5 234V235M225.5 234V235M226.5 234V235M227.5 234V235M228.5 234V235M229.5 234V235M230.5 234V235M231.5 234V235M232.5 234V235M233.5 234V235M234.5 234V235M235.5 234V235M236.5 234V235M237.5 234V235M238.5 234V235M239.5 234V235M240.5 234V235M241.5 234V235M242.5 234V235M243.5 234V235M244.5 234V235M245.5 234V235M246.5 234V235M247.5 234V235M248.5 234V235M249.5 234V235M250.5 234V235M251.5 234V235M252.5 234V235M253.5 234V235M254.5 234V235M255.5 234V236M256.5 233V235M257.5 233V236M258.5 233V236M259.5 233V236M260.5 233V236M261.5 233V236M262.5 233V236M263.5 233V236M264.5 233V236M265.5 233V236M266.5 233V237M267.5 232V237M268.5 233V237M269.5 233V237M270.5 233V237M271.5 230V237M272.5 232V237M273.5 232V239M274.5 231V238M275.5 231V238M276.5 232V237M277.5 232V237M278.5 232V238M279.5 231V237M280.5 230V238M281.5 231V239M282.5 230V239M283.5 228V239M284.5 230V239M285.5 231V238M286.5 229V240M287.5 224V238M288.5 230V240M289.5 226V239M290.5 229V239M291.5 229V238M292.5 225V240M293.5 231V238M294.5 231V240M295.5 229V238M296.5 225V239M297.5 230V239M298.5 229V240M299.5 231V240M300.5 229V240M301.5 221V239M302.5 229V240M303.5 230V239M304.5 229V239M305.5 229V244M306.5 221V238M307.5 229V241M308.5 228V239M309.5 228V242M310.5 230V241M311.5 226V245M312.5 226V243M313.5 226V240M314.5 226V243M315.5 225V243M316.5 226V242M317.5 228V240M318.5 227V240M319.5 229V240M320.5 228V246M321.5 228V241M322.5 229V241M323.5 229V241M324.5 223V241M325.5 229V242M326.5 227V242M327.5 227V241M328.5 226V241M329.5 229V247M330.5 228V242M331.5 229V244M332.5 228V243M333.5 226V243M334.5 228V243M335.5 227V241M336.5 230V242M337.5 228V240M338.5 222V247M339.5 228V239M340.5 230V240M341.5 229V240M342.5 230V240M343.5 230V239M344.5 230V240M345.5 228V241M346.5 229V239M347.5 229V239M348.5 229V240M349.5 228V241M350.5 230V240M351.5 227V241M352.5 227V240M353.5 229V240M354.5 229V239M355.5 228V243M356.5 226V242M357.5 227V242M358.5 227V242M359.5 226V243M360.5 228V241M361.5 228V240M362.5 228V239M363.5 228V246M364.5 228V240M365.5 230V239M366.5 230V241M367.5 229V241M368.5 228V241M369.5 230V240M370.5 228V240M371.5 219V242M372.5 228V242M373.5 227V240M374.5 226V243M375.5 227V240M376.5 227V243M377.5 226V241M378.5 227V247M379.5 228V240M380.5 225V243M381.5 229V243M382.5 227V242M383.5 225V242M384.5 226V241M385.5 225V240M386.5 228V242M387.5 227V244M388.5 226V240M389.5 229V241M390.5 223V244M391.5 230V239M392.5 228V241M393.5 229V241M394.5 231V241M395.5 229V240M396.5 230V239M397.5 230V240M398.5 229V240M399.5 231V240M400.5 231V238M401.5 220V241M402.5 230V244M403.5 221V238M404.5 231V240M405.5 230V239M406.5 230V239M407.5 229V239M408.5 227V241M409.5 229V242M410.5 230V240M411.5 219V241M412.5 229V240M413.5 228V241M414.5 220V240M415.5 226V243M416.5 226V242M417.5 227V243M418.5 226V241M557.5 225V243M558.5 227V241M559.5 225V243M560.5 227V244M561.5 217V241M562.5 227V244M563.5 226V242M564.5 225V243M565.5 227V243M566.5 226V244M567.5 225V243M568.5 226V242M569.5 229V244M570.5 227V242M571.5 227V243M572.5 227V239M573.5 229V242M574.5 229V241M575.5 221V241M576.5 229V242M577.5 228V239M578.5 229V240M579.5 228V241M580.5 226V241M581.5 225V241M582.5 224V241M583.5 225V241M584.5 224V241M585.5 224V243M586.5 228V241M587.5 227V242M588.5 227V245M589.5 224V246M590.5 229V244M591.5 228V243M592.5 226V242M593.5 228V241M594.5 224V245M595.5 226V243M596.5 226V241M597.5 227V243M598.5 228V241M599.5 228V241M600.5 229V242M601.5 229V241M602.5 230V240M603.5 228V239M604.5 228V241M605.5 229V241M606.5 230V241M607.5 230V240M608.5 227V240M609.5 227V241M610.5 227V241M611.5 228V240M612.5 228V240M613.5 228V241M614.5 229V243M615.5 227V240M616.5 229V243M617.5 229V242M618.5 227V240M619.5 226V242M620.5 227V241M621.5 229V241M622.5 227V243M623.5 225V241M624.5 229V242M625.5 225V245M626.5 221V244M627.5 229V241M628.5 228V241M629.5 227V241M630.5 229V240M631.5 228V240M632.5 226V243M633.5 229V240M634.5 227V242M635.5 229V241M636.5 225V244M637.5 228V245M638.5 227V242M639.5 226V244M640.5 228V243M641.5 227V240M642.5 226V242M643.5 227V241M644.5 222V241M645.5 229V240M646.5 229V238M647.5 230V240M648.5 230V239M649.5 228V240M650.5 230V240M651.5 230V239M652.5 228V241M653.5 228V240M654.5 230V239M655.5 230V239M656.5 229V240M657.5 228V239M658.5 229V241M659.5 229V240M660.5 228V240M661.5 229V240M662.5 229V239M663.5 230V239M664.5 230V239M665.5 228V239M666.5 230V240M667.5 228V238M668.5 231V238M669.5 231V238M670.5 229V241M671.5 230V239M672.5 231V242M673.5 230V240M674.5 230V240M675.5 231V239M676.5 230V239M677.5 230V240M678.5 230V239M679.5 230V239M680.5 230V240M681.5 231V240M682.5 228V240M683.5 231V240M684.5 230V240M685.5 228V240M686.5 230V239M687.5 230V240M688.5 229V242M689.5 230V239M690.5 228V240M691.5 230V240M692.5 230V242M693.5 228V240M694.5 230V241M695.5 228V243M696.5 229V241M697.5 229V241M698.5 230V241M699.5 229V239M700.5 229V241M701.5 228V244M702.5 227V241M703.5 226V240M704.5 226V241M705.5 229V241M706.5 228V240M707.5 226V242M708.5 229V243M709.5 227V240M710.5 230V239M711.5 229V246M712.5 227V240M713.5 227V240M714.5 228V241M715.5 227V243M716.5 227V240M717.5 228V241M718.5 229V240M719.5 227V243M720.5 226V240M721.5 228V241M722.5 229V240M723.5 228V239M724.5 227V240M725.5 230V239M726.5 229V239M727.5 231V239M728.5 229V241M729.5 230V239M730.5 228V241M731.5 228V239M732.5 229V239M733.5 228V240M734.5 230V239M735.5 229V241M736.5 229V239M737.5 228V240M738.5 229V241M739.5 227V239M740.5 227V239M741.5 227V239M742.5 227V243M743.5 227V240M744.5 226V241M745.5 229V246M746.5 227V242M747.5 226V240M748.5 228V243M749.5 226V243M750.5 228V242M751.5 229V242M752.5 222V240M753.5 230V239M754.5 229V240M755.5 228V241M756.5 228V240M757.5 229V241M758.5 228V242M759.5 230V242M760.5 230V240M761.5 230V240M762.5 229V239M763.5 229V240M764.5 230V241M765.5 230V239M766.5 229V239M767.5 228V241M768.5 228V240M769.5 230V239M770.5 227V240M771.5 228V240M772.5 226V242M773.5 227V241M774.5 228V242M775.5 228V239M776.5 227V241M777.5 227V242M778.5 228V242M779.5 227V240M780.5 229V242M781.5 229V240M782.5 228V242M783.5 229V242M784.5 221V243M785.5 228V243M786.5 229V242M787.5 226V241M788.5 226V243M789.5 228V243M790.5 229V242M791.5 229V242M792.5 230V241M793.5 226V243M794.5 228V239M795.5 227V240M796.5 227V242M797.5 230V240M798.5 229V241M799.5 229V241M800.5 229V241M801.5 230V240M802.5 230V240M803.5 230V240M804.5 229V245M805.5 229V240M806.5 228V243M807.5 229V241M808.5 230V238M809.5 231V240M810.5 225V239M811.5 230V240M812.5 228V239M813.5 230V240M814.5 229V239M815.5 223V239M816.5 230V239M817.5 230V239M818.5 228V240M819.5 230V238M820.5 229V239M821.5 229V241M822.5 230V239M823.5 229V239M824.5 229V239M825.5 228V242M826.5 221V239M827.5 230V240M828.5 228V239M829.5 228V243M830.5 230V240M831.5 225V239M832.5 224V239M833.5 228V240M834.5 230V240M835.5 230V238M836.5 230V239M837.5 229V240M838.5 229V238M839.5 230V238M840.5 223V240M841.5 230V238M842.5 231V245M843.5 231V239M844.5 229V239M845.5 229V240M846.5 230V239" stroke="#6cf86c" stroke-width="1" fill="none"/>
<path d="M419.5 228V242M420.5 228V240M421.5 225V241M422.5 229V240M423.5 229V241M424.5 229V240M425.5 221V243M426.5 228V243M427.5 226V241M428.5 226V242M429.5 227V240M430.5 228V241M431.5 227V246M432.5 230V244M433.5 227V241M434.5 228V240M435.5 228V242M436.5 229V240M437.5 229V242M438.5 227V241M439.5 229V241M440.5 228V241M441.5 229V241M442.5 229V240M443.5 222V240M444.5 229V240M445.5 229V241M446.5 228V240M447.5 227V241M448.5 222V240M449.5 229V241M450.5 228V242M451.5 229V242M452.5 229V240M453.5 230V239M454.5 228V241M455.5 230V240M456.5 228V238M457.5 230V240M458.5 230V240M459.5 230V240M460.5 229V247M461.5 228V241M462.5 230V240M463.5 230V240M464.5 230V240M465.5 229V240M466.5 230V241M467.5 229V240M468.5 230V241M469.5 230V239M470.5 228V241M471.5 229V239M472.5 230V240M473.5 228V240M474.5 223V240M475.5 230V240M476.5 229V244M477.5 228V246M478.5 228V246M479.5 226V245M480.5 224V243M481.5 222V244M482.5 222V246M483.5 222V247M484.5 222V246M485.5 222V245M486.5 223V247M487.5 222V248M488.5 222V248M489.5 220V251M490.5 222V248M491.5 217V248M492.5 217V252M493.5 221V253M494.5 220V252M495.5 206V252M496.5 218V252M497.5 215V253M498.5 211V254M499.5 219V250M500.5 215V253M501.5 212V255M502.5 216V257M503.5 215V252M504.5 215V259M505.5 206V258M506.5 210V256M507.5 212V253M508.5 215V259M509.5 204V262M510.5 214V260M511.5 206V260M512.5 211V259M513.5 213V258M514.5 206V262M515.5 200V254M516.5 207V257M517.5 202V263M518.5 207V265M519.5 207V260M520.5 209V262M521.5 211V257M522.5 209V258M523.5 212V256M524.5 217V256M525.5 214V254M526.5 219V257M527.5 217V253M528.5 218V252M529.5 218V249M530.5 220V253M531.5 218V252M532.5 218V249M533.5 221V248M534.5 223V247M535.5 221V246M536.5 221V247M537.5 222V252M538.5 222V246M539.5 225V245M540.5 223V247M541.5 225V246M542.5 226V246M543.5 225V246M544.5 218V243M545.5 222V245M546.5 224V243M547.5 227V246M548.5 226V245M549.5 227V241M550.5 225V243M551.5 227V244M552.5 226V245M553.5 227V242M554.5 228V247M555.5 227V244M556.5 226V240" stroke="#fff" stroke-width="1" fill="none"/>
<path d="M224.5 359V360M225.5 359V360M226.5 359V360M227.5 359V360M228.5 359V360M229.5 359V360M230.5 359V360M231.5 359V360M232.5 359V360M233.5 359V360M234.5 359V360M235.5 359V360M236.5 359V360M237.5 359V360M238.5 359V360M239.5 359V360M240.5 359V360M241.5 359V360M242.5 359V360M243.5 359V360M244.5 359V360M245.5 359V360M246.5 359V360M247.5 359V360M248.5 359V360M249.5 359V360M250.5 359V360M251.5 359V360M252.5 359V360M253.5 359V360M254.5 359V360M255.5 359V361M256.5 358V360M257.5 358V361M258.5 358V361M259.5 358V361M260.5 358V361M261.5 358V361M262.5 358V361M263.5 358V361M264.5 358V361M265.5 358V361M266.5 358V362M267.5 357V362M268.5 358V362M269.5 358V362M270.5 358V362M271.5 355V362M272.5 357V362M273.5 357V364M274.5 356V363M275.5 356V363M276.5 357V362M277.5 357V362M278.5 357V363M279.5 356V362M280.5 355V363M281.5 356V364M282.5 355V364M283.5 353V364M284.5 355V364M285.5 356V363M286.5 354V365M287.5 349V363M288.5 355V365M289.5 351V364M290.5 354V364M291.5 354V363M292.5 350V365M293.5 356V363M294.5 356V365M295.5 354V363M296.5 350V364M297.5 355V364M298.5 354V365M299.5 356V365M300.5 354V365M301.5 346V364M302.5 354V365M303.5 355V364M304.5 354V364M305.5 354V369M306.5 346V363M307.5 354V366M308.5 353V364M309.5 353V367M310.5 355V366M311.5 351V370M312.5 351V368M313.5 351V365M314.5 351V368M315.5 350V368M316.5 351V367M317.5 353V365M318.5 352V365M319.5 354V365M320.5 353V371M321.5 353V366M322.5 354V366M323.5 354V366M324.5 348V366M325.5 354V367M326.5 352V367M327.5 352V366M328.5 351V366M329.5 354V372M330.5 353V367M331.5 354V369M332.5 353V368M333.5 351V368M334.5 353V368M335.5 352V366M336.5 355V367M337.5 353V365M338.5 347V372M339.5 353V364M340.5 355V365M341.5 354V365M342.5 355V365M343.5 355V364M344.5 355V365M345.5 353V366M346.5 354V364M347.5 354V364M348.5 354V365M349.5 353V366M350.5 355V365M351.5 352V366M352.5 352V365M353.5 354V365M354.5 354V364M355.5 353V368M356.5 351V367M357.5 352V367M358.5 352V367M359.5 351V368M360.5 353V366M361.5 353V365M362.5 353V364M363.5 353V371M364.5 353V365M365.5 355V364M366.5 355V366M367.5 354V366M368.5 353V366M369.5 355V365M370.5 353V365M371.5 344V367M372.5 353V367M373.5 352V365M374.5 351V368M375.5 352V365M376.5 352V368M377.5 351V366M378.5 352V372M379.5 353V365M380.5 350V368M381.5 354V368M382.5 352V367M383.5 350V367M384.5 351V366M385.5 350V365M386.5 353V367M387.5 352V369M388.5 351V365M389.5 354V366M390.5 348V369M391.5 355V364M392.5 353V366M393.5 354V366M394.5 356V366M395.5 354V365M396.5 355V364M397.5 355V365M398.5 354V365M399.5 356V365M400.5 356V363M401.5 345V366M402.5 355V369M403.5 346V363M404.5 356V365M405.5 355V364M406.5 355V364M407.5 354V364M408.5 352V366M409.5 354V367M410.5 355V365M411.5 344V366M412.5 354V365M413.5 353V366M414.5 345V365M415.5 351V368M416.5 351V367M417.5 352V368M418.5 351V366M557.5 350V368M558.5 352V366M559.5 350V368M560.5 352V369M561.5 342V366M562.5 352V369M563.5 351V367M564.5 350V368M565.5 352V368M566.5 351V369M567.5 350V368M568.5 351V367M569.5 354V369M570.5 352V367M571.5 352V368M572.5 352V364M573.5 354V367M574.5 354V366M575.5 346V366M576.5 354V367M577.5 353V364M578.5 354V365M579.5 353V366M580.5 351V366M581.5 350V366M582.5 349V366M583.5 350V366M584.5 349V366M585.5 349V368M586.5 353V366M587.5 352V367M588.5 352V370M589.5 349V371M590.5 354V369M591.5 353V368M592.5 351V367M593.5 353V366M594.5 349V370M595.5 351V368M596.5 351V366M597.5 352V368M598.5 353V366M599.5 353V366M600.5 354V367M601.5 354V366M602.5 355V365M603.5 353V364M604.5 353V366M605.5 354V366M606.5 355V366M607.5 355V365M608.5 352V365M609.5 352V366M610.5 352V366M611.5 353V365M612.5 353V365M613.5 353V366M614.5 354V368M615.5 352V365M616.5 354V368M617.5 354V367M618.5 352V365M619.5 351V367M620.5 352V366M621.5 354V366M622.5 352V368M623.5 350V366M624.5 354V367M625.5 350V370M626.5 346V369M627.5 354V366M628.5 353V366M629.5 352V366M630.5 354V365M631.5 353V365M632.5 351V368M633.5 354V365M634.5 352V367M635.5 354V366M636.5 350V369M637.5 353V370M638.5 352V367M639.5 351V369M640.5 353V368M641.5 352V365M642.5 351V367M643.5 352V366M644.5 347V366M645.5 354V365M646.5 354V363M647.5 355V365M648.5 355V364M649.5 353V365M650.5 355V365M651.5 355V364M652.5 353V366M653.5 353V365M654.5 355V364M655.5 355V364M656.5 354V365M657.5 353V364M658.5 354V366M659.5 354V365M660.5 353V365M661.5 354V365M662.5 354V364M663.5 355V364M664.5 355V364M665.5 353V364M666.5 355V365M667.5 353V363M668.5 356V363M669.5 356V363M670.5 354V366M671.5 355V364M672.5 356V367M673.5 355V365M674.5 355V365M675.5 356V364M676.5 355V364M677.5 355V365M678.5 355V364M679.5 355V364M680.5 355V365M681.5 356V365M682.5 353V365M683.5 356V365M684.5 355V365M685.5 353V365M686.5 355V364M687.5 355V365M688.5 354V367M689.5 355V364M690.5 353V365M691.5 355V365M692.5 355V367M693.5 353V365M694.5 355V366M695.5 353V368M696.5 354V366M697.5 354V366M698.5 355V366M699.5 354V364M700.5 354V366M701.5 353V369M702.5 352V366M703.5 351V365M704.5 351V366M705.5 354V366M706.5 353V365M707.5 351V367M708.5 354V368M709.5 352V365M710.5 355V364M711.5 354V371M712.5 352V365M713.5 352V365M714.5 353V366M715.5 352V368M716.5 352V365M717.5 353V366M718.5 354V365M719.5 352V368M720.5 351V365M721.5 353V366M722.5 354V365M723.5 353V364M724.5 352V365M725.5 355V364M726.5 354V364M727.5 356V364M728.5 354V366M729.5 355V364M730.5 353V366M731.5 353V364M732.5 354V364M733.5 353V365M734.5 355V364M735.5 354V366M736.5 354V364M737.5 353V365M738.5 354V366M739.5 352V364M740.5 352V364M741.5 352V364M742.5 352V368M743.5 352V365M744.5 351V366M745.5 354V371M746.5 352V367M747.5 351V365M748.5 353V368M749.5 351V368M750.5 353V367M751.5 354V367M752.5 347V365M753.5 355V364M754.5 354V365M755.5 353V366M756.5 353V365M757.5 354V366M758.5 353V367M759.5 355V367M760.5 355V365M761.5 355V365M762.5 354V364M763.5 354V365M764.5 355V366M765.5 355V364M766.5 354V364M767.5 353V366M768.5 353V365M769.5 355V364M770.5 352V365M771.5 353V365M772.5 351V367M773.5 352V366M774.5 353V367M775.5 353V364M776.5 352V366M777.5 352V367M778.5 353V367M779.5 352V365M780.5 354V367M781.5 354V365M782.5 353V367M783.5 354V367M784.5 346V368M785.5 353V368M786.5 354V367M787.5 351V366M788.5 351V368M789.5 353V368M790.5 354V367M791.5 354V367M792.5 355V366M793.5 351V368M794.5 353V364M795.5 352V365M796.5 352V367M797.5 355V365M798.5 354V366M799.5 354V366M800.5 354V366M801.5 355V365M802.5 355V365M803.5 355V365M804.5 354V370M805.5 354V365M806.5 353V368M807.5 354V366M808.5 355V363M809.5 356V365M810.5 350V364M811.5 355V365M812.5 353V364M813.5 355V365M814.5 354V364M815.5 348V364M816.5 355V364M817.5 355V364M818.5 353V365M819.5 355V363M820.5 354V364M821.5 354V366M822.5 355V364M823.5 354V364M824.5 354V364M825.5 353V367M826.5 346V364M827.5 355V365M828.5 353V364M829.5 353V368M830.5 355V365M831.5 350V364M832.5 349V364M833.5 353V365M834.5 355V365M835.5 355V363M836.5 355V364M837.5 354V365M838.5 354V363M839.5 355V363M840.5 348V365M841.5 355V363M842.5 356V370M843.5 356V364M844.5 354V364M845.5 354V365M846.5 355V364" stroke="#6cf86c" stroke-width="1" fill="none"/>
<path d="M419.5 353V367M420.5 353V365M421.5 350V366M422.5 354V365M423.5 354V366M424.5 354V365M425.5 346V368M426.5 353V368M427.5 351V366M428.5 351V367M429.5 352V365M430.5 353V366M431.5 352V371M432.5 355V369M433.5 352V366M434.5 353V365M435.5 353V367M436.5 354V365M437.5 354V367M438.5 352V366M439.5 354V366M440.5 353V366M441.5 354V366M442.5 354V365M443.5 347V365M444.5 354V365M445.5 354V366M446.5 353V365M447.5 352V366M448.5 347V365M449.5 354V366M450.5 353V367M451.5 354V367M452.5 354V365M453.5 355V364M454.5 353V366M455.5 355V365M456.5 353V363M457.5 355V365M458.5 355V365M459.5 355V365M460.5 354V372M461.5 353V366M462.5 355V365M463.5 355V365M464.5 355V365M465.5 354V365M466.5 355V366M467.5 354V365M468.5 355V366M469.5 355V364M470.5 353V366M471.5 354V364M472.5 355V365M473.5 353V365M474.5 348V365M475.5 355V365M476.5 354V369M477.5 353V371M478.5 353V371M479.5 351V370M480.5 349V368M481.5 347V369M482.5 347V371M483.5 347V372M484.5 347V371M485.5 347V370M486.5 348V372M487.5 347V373M488.5 347V373M489.5 345V376M490.5 347V373M491.5 342V373M492.5 342V377M493.5 346V378M494.5 345V377M495.5 331V377M496.5 343V377M497.5 340V378M498.5 336V379M499.5 344V375M500.5 340V378M501.5 337V380M502.5 341V382M503.5 340V377M504.5 340V384M505.5 331V383M506.5 335V381M507.5 337V378M508.5 340V384M509.5 329V387M510.5 339V385M511.5 331V385M512.5 336V384M513.5 338V383M514.5 331V387M515.5 325V379M516.5 332V382M517.5 327V388M518.5 332V390M519.5 332V385M520.5 334V387M521.5 336V382M522.5 334V383M523.5 337V381M524.5 342V381M525.5 339V379M526.5 344V382M527.5 342V378M528.5 343V377M529.5 343V374M530.5 345V378M531.5 343V377M532.5 343V374M533.5 346V373M534.5 348V372M535.5 346V371M536.5 346V372M537.5 347V377M538.5 347V371M539.5 350V370M540.5 348V372M541.5 350V371M542.5 351V371M543.5 350V371M544.5 343V368M545.5 347V370M546.5 349V368M547.5 352V371M548.5 351V370M549.5 352V366M550.5 350V368M551.5 352V369M552.5 351V370M553.5 352V367M554.5 353V372M555.5 352V369M556.5 351V365" stroke="#fff" stroke-width="1" fill="none"/>
</svg>
<!--/WAVE-->
<!--SCALE-->
<svg class="a" style="left:0;top:0" width="905" height="554">
<path d="M849 175V427" stroke="#b4b4b4" stroke-width="2"/>
<path d="M848 296.5H881M848 298.5H881" stroke="#b8b8b8" stroke-width="1"/>
<path d="M850 178.5H853M850 181.5H853M850 185.5H856M850 188.5H853M850 191.5H853M850 195.5H853M850 198.5H853M850 202.5H856M850 205.5H853M850 208.5H853M850 212.5H853M850 215.5H853M850 219.5H856M850 222.5H853M850 225.5H853M850 229.5H853M850 232.5H853M850 235.5H856M850 239.5H853M850 242.5H853M850 246.5H853M850 249.5H853M850 252.5H856M850 256.5H853M850 259.5H853M850 263.5H853M850 266.5H853M850 269.5H856M850 273.5H853M850 276.5H853M850 280.5H853M850 283.5H853M850 286.5H856M850 290.5H853M850 293.5H853M850 303.5H853M850 306.5H853M850 310.5H856M850 313.5H853M850 316.5H853M850 320.5H853M850 323.5H853M850 327.5H856M850 330.5H853M850 333.5H853M850 337.5H853M850 340.5H853M850 343.5H856M850 347.5H853M850 350.5H853M850 354.5H853M850 357.5H853M850 360.5H856M850 364.5H853M850 367.5H853M850 371.5H853M850 374.5H853M850 377.5H856M850 381.5H853M850 384.5H853M850 387.5H853M850 391.5H853M850 394.5H856M850 398.5H853M850 401.5H853M850 404.5H853M850 408.5H853M850 411.5H856M850 415.5H853M850 418.5H853" stroke="#111" stroke-width="1"/>
<path d="M224.5 428V433M237.5 428V431M250.5 428V431M263.5 428V431M276.5 428V431M289.5 428V433M302.5 428V431M315.5 428V431M328.5 428V431M341.5 428V431M354.5 428V433M367.5 428V431M380.5 428V431M393.5 428V431M406.5 428V431M419.5 428V433M432.5 428V431M445.5 428V431M458.5 428V431M471.5 428V431M484.5 428V433M497.5 428V431M510.5 428V431M523.5 428V431M536.5 428V431M549.5 428V433M562.5 428V431M575.5 428V431M588.5 428V431M601.5 428V431M614.5 428V433M627.5 428V431M640.5 428V431M653.5 428V431M666.5 428V431M679.5 428V433M692.5 428V431M705.5 428V431M718.5 428V431M731.5 428V431M744.5 428V433M757.5 428V431M770.5 428V431M783.5 428V431M796.5 428V431M809.5 428V433M822.5 428V431M835.5 428V431" stroke="#111" stroke-width="1.2"/>
</svg>
<div class="tx" style="left:858.5px;top:165.5px;color:#111;font-size:9.6px">dB</div>
<div class="sl" style="top:184.7px">-1</div>
<div class="sl" style="top:309.6px">-1</div>
<div class="sl" style="top:201.6px">-4</div>
<div class="sl" style="top:326.6px">-4</div>
<div class="sl" style="top:218.6px">-10</div>
<div class="sl" style="top:343.6px">-10</div>
<div class="sl" style="top:235.5px">-90</div>
<div class="sl" style="top:360.6px">-90</div>
<div class="sl" style="top:252.4px">-10</div>
<div class="sl" style="top:377.6px">-10</div>
<div class="sl" style="top:269.4px">-4</div>
<div class="sl" style="top:394.6px">-4</div>
<div class="sl" style="top:286.3px">-1</div>
<div class="sl" style="top:411.6px">-1</div>
<div class="tx" style="left:225px;top:440.5px;color:#111;font-size:9.6px">hms</div>
<div class="tx" style="left:259px;top:440.5px;width:60px;text-align:center;color:#111;font-size:9.6px">0:01.25</div>
<div class="tx" style="left:324px;top:440.5px;width:60px;text-align:center;color:#111;font-size:9.6px">0:02.50</div>
<div class="tx" style="left:389px;top:440.5px;width:60px;text-align:center;color:#111;font-size:9.6px">0:03.75</div>
<div class="tx" style="left:454px;top:440.5px;width:60px;text-align:center;color:#111;font-size:9.6px">0:05.0</div>
<div class="tx" style="left:519px;top:440.5px;width:60px;text-align:center;color:#111;font-size:9.6px">0:06.25</div>
<div class="tx" style="left:584px;top:440.5px;width:60px;text-align:center;color:#111;font-size:9.6px">0:07.50</div>
<div class="tx" style="left:649px;top:440.5px;width:60px;text-align:center;color:#111;font-size:9.6px">0:08.75</div>
<div class="tx" style="left:714px;top:440.5px;width:60px;text-align:center;color:#111;font-size:9.6px">0:10.0</div>
<div class="tx" style="left:779px;top:440.5px;width:60px;text-align:center;color:#111;font-size:9.6px">0:11.25</div>
<!--/SCALE-->
<div class="a" style="left:884px;top:160px;width:17px;height:288px;background:#000"></div>

<!-- transport -->
<div class="a" style="left:220px;top:450px;width:683px;height:80px;border-left:1px solid #d4d4d4;border-top:1px solid #f0f0f0;border-bottom:1px solid #777;background:#e8e8e8"></div>
<div class="a" style="left:382px;top:452px;width:1px;height:75px;background:#d0d0d0"></div>
<div class="a" style="left:513px;top:452px;width:1px;height:75px;background:#d0d0d0"></div>
<div class="a" style="left:606px;top:452px;width:1px;height:75px;background:#d0d0d0"></div>
<div class="tb" style="left:242px;top:462px"></div>
<div class="tb" style="left:266px;top:462px"></div>
<div class="tb" style="left:290px;top:462px"></div>
<div class="tb" style="left:314px;top:462px"></div>
<div class="tb" style="left:338px;top:462px"></div>
<div class="tb" style="left:242px;top:494px"></div>
<div class="tb" style="left:266px;top:494px"></div>
<div class="tb" style="left:290px;top:494px"></div>
<div class="tb" style="left:314px;top:494px"></div>
<div class="tb" style="left:338px;top:494px"></div>
<!--TICONS-->
<svg class="a" style="left:0;top:0" width="905" height="554">
<defs>
<radialGradient id="gLens" cx="0.45" cy="0.35" r="0.7"><stop offset="0" stop-color="#ffffff"/><stop offset="0.6" stop-color="#dde6ee"/><stop offset="1" stop-color="#b4c4d4"/></radialGradient>
<linearGradient id="gPlay" x1="0" y1="0" x2="0" y2="1"><stop offset="0" stop-color="#3cb83c"/><stop offset="1" stop-color="#1a8a1a"/></linearGradient>
<linearGradient id="gBl" x1="0" y1="0" x2="0" y2="1"><stop offset="0" stop-color="#2a62c0"/><stop offset="1" stop-color="#0c3c98"/></linearGradient>
<radialGradient id="gRec" cx="0.4" cy="0.3" r="0.8"><stop offset="0" stop-color="#ff7a7a"/><stop offset="0.5" stop-color="#e02a2a"/><stop offset="1" stop-color="#b01010"/></radialGradient>
</defs>
<!-- row1 -->
<path d="M249 467L256.5 472L249 477Z" fill="url(#gPlay)"/>
<g fill="none" stroke="#1a4aa8" stroke-width="1.7">
<path d="M273.3 471.5Q273.3 469.3 275.8 469.3H278.5"/>
<path d="M279.2 472.5Q279.2 474.7 276.7 474.7H274"/>
</g>
<path d="M278 467L280.8 469.3 278 471.6Z M274.5 472.4L271.7 474.7 274.5 477Z" fill="#1a4aa8"/>
<circle cx="300" cy="472" r="5.2" fill="#1c9a1c" stroke="#107010" stroke-width="0.6"/>
<path d="M298.3 469L302.5 472 298.3 475Z" fill="#fff"/>
<path d="M323.5 467L318 472 323.5 477ZM329 467L323.5 472 329 477Z" fill="url(#gBl)"/>
<path d="M343 467L348.5 472 343 477ZM348.5 467L354 472 348.5 477Z" fill="url(#gBl)"/>
<!-- row2 -->
<rect x="249" y="501" width="6" height="6" fill="#d42020"/>
<rect x="272" y="499" width="3" height="10" rx="0.5" fill="url(#gBl)"/>
<rect x="277" y="499" width="3" height="10" rx="0.5" fill="url(#gBl)"/>
<circle cx="300" cy="504" r="4.6" fill="url(#gRec)"/>
<rect x="320" y="499" width="2" height="10" fill="url(#gBl)"/>
<path d="M329 499L322.5 504 329 509Z" fill="url(#gBl)"/>
<rect x="351" y="499" width="2" height="10" fill="url(#gBl)"/>
<path d="M343.5 499L350 504 343.5 509Z" fill="url(#gBl)"/>
<!-- zoom icons -->
<g id="z1">
<path d="M409 475.5L413.5 480" stroke="#3a3a3a" stroke-width="2.6" stroke-linecap="round"/>
<circle cx="405" cy="470.5" r="5.6" fill="url(#gLens)" stroke="#4a6a7a" stroke-width="1"/>
<path d="M410.5 465V474M406 469.5H415" stroke="#1a6ad8" stroke-width="2.2"/>
</g>
<g>
<path d="M433 475.5L437.5 480" stroke="#3a3a3a" stroke-width="2.6" stroke-linecap="round"/>
<circle cx="429" cy="470.5" r="5.6" fill="url(#gLens)" stroke="#4a6a7a" stroke-width="1"/>
<path d="M430 469.5H439" stroke="#1a6ad8" stroke-width="2.2"/>
</g>
<g>
<rect x="449.5" y="465.5" width="12.5" height="14" fill="none" stroke="#1a50b0" stroke-width="1" stroke-dasharray="2 1"/>
<path d="M456.5 475.5L461 480" stroke="#3a3a3a" stroke-width="2.6" stroke-linecap="round"/>
<circle cx="452.7" cy="470.5" r="5.6" fill="url(#gLens)" stroke="#4a6a7a" stroke-width="1"/>
</g>
<g>
<path d="M480.5 475.5L485 480" stroke="#3a3a3a" stroke-width="2.6" stroke-linecap="round"/>
<circle cx="476.8" cy="470.5" r="5.6" fill="url(#gLens)" stroke="#4a6a7a" stroke-width="1"/>
<path d="M476.8 467.5V473.5M473.8 470.5H479.8" stroke="#1a4aa8" stroke-width="2"/>
<path d="M484 466V478" stroke="#1a6ad8" stroke-width="1.8"/>
<path d="M481 468.5L484 464.8 487 468.5ZM481 475.5L484 479.5 487 475.5Z" fill="#1a6ad8"/>
</g>
<g>
<path d="M409.5 507L414 511.5" stroke="#3a3a3a" stroke-width="2.6" stroke-linecap="round"/>
<circle cx="405.5" cy="502.5" r="5.6" fill="url(#gLens)" stroke="#4a6a7a" stroke-width="1"/>
<path d="M402.5 496.5H400V511H402.5" fill="none" stroke="#1a6ad8" stroke-width="2"/>
</g>
<g>
<path d="M433 507.5L437.5 512" stroke="#3a3a3a" stroke-width="2.6" stroke-linecap="round"/>
<circle cx="429" cy="502.5" r="5.6" fill="url(#gLens)" stroke="#4a6a7a" stroke-width="1"/>
<path d="M425 502.5H432" stroke="#1a6ad8" stroke-width="2"/>
<path d="M434.5 496.8L438.5 500.8 434.5 504.8 430.5 500.8Z" fill="#2a78e0" stroke="#1a50b0" stroke-width="0.6"/>
<circle cx="434.5" cy="500.8" r="1" fill="#0c3c98"/>
</g>
<g>
<path d="M452 507L448 511.5" stroke="#3a3a3a" stroke-width="2.6" stroke-linecap="round"/>
<circle cx="456" cy="502" r="5.6" fill="url(#gLens)" stroke="#4a6a7a" stroke-width="1"/>
<path d="M459.5 496.5H462V511H459.5" fill="none" stroke="#1a6ad8" stroke-width="2"/>
</g>
<g>
<path d="M480.5 507.5L485 512" stroke="#3a3a3a" stroke-width="2.6" stroke-linecap="round"/>
<circle cx="476.8" cy="502.5" r="5.6" fill="url(#gLens)" stroke="#4a6a7a" stroke-width="1"/>
<path d="M473.8 502.5H479.8" stroke="#1a4aa8" stroke-width="2"/>
<path d="M484 498V510" stroke="#1a6ad8" stroke-width="1.8"/>
<path d="M481 500.5L484 496.8 487 500.5ZM481 507.5L484 511.5 487 507.5Z" fill="#1a6ad8"/>
</g>
</svg>
<!--/TICONS-->
<div class="tx" style="left:523px;top:491px;font-size:14px;color:#8a8a8a">0:00:03.749</div>
<div class="tx" style="left:620.5px;top:483px">Selection:</div>
<div class="tx" style="left:631px;top:505px">Length:</div>
<div class="val" style="left:689px;top:482px">0:00:03.749</div>
<div class="val" style="left:785px;top:482px">0:00:06.383</div>
<div class="val" style="left:689px;top:505px">0:00:02.634</div>
<div class="val" style="left:785px;top:505px">0:00:11.978</div>

<!-- status bar -->
<div class="a" style="left:4px;top:529px;width:899px;height:1px;background:#707070"></div>
<div class="a" style="left:2px;top:530px;width:902px;height:23px;border-top:1px solid #fbfbfb;background:linear-gradient(#f4f4f4,#e6e6e6 45%,#dcdcdc 90%,#f0f0f0)"></div>
<div class="a" style="left:6px;top:534px;width:1px;height:15px;background:linear-gradient(rgba(120,120,120,0),#777 50%,rgba(120,120,120,0))"></div>
<div class="a" style="left:221px;top:534px;width:1px;height:15px;background:linear-gradient(rgba(120,120,120,0),#777 50%,rgba(120,120,120,0))"></div>
<div class="tx" style="left:223px;top:540px">D:\audio\01.wma - [ WMA 44,100 Hz; 16 Bit; Stereo; 355 kbps; ]</div>
</body></html>
